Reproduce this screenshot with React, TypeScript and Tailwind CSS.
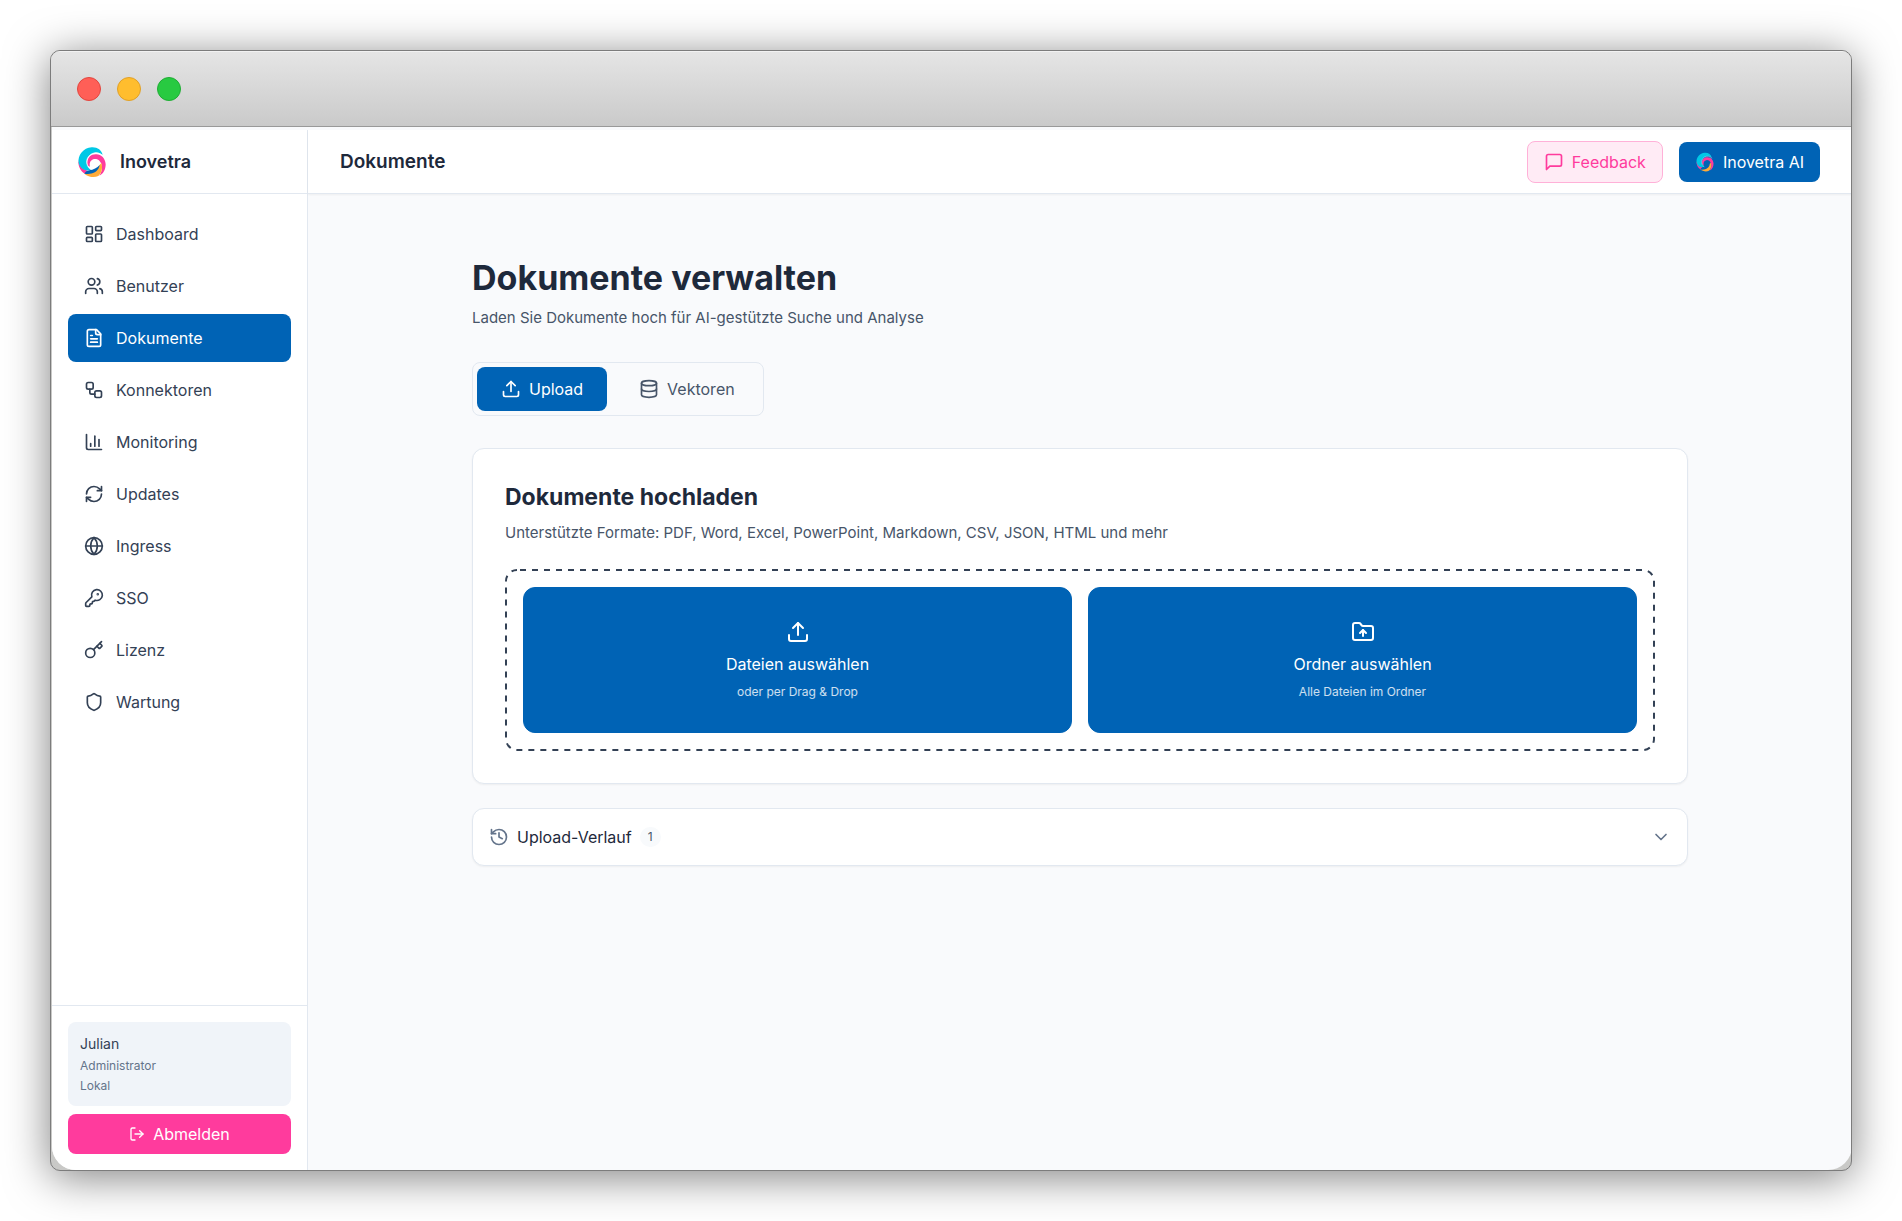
import { useState } from "react";
import type { ReactNode } from "react";
import {
  ChartColumn,
  ChevronDown,
  Database,
  FolderUp,
  Globe,
  History,
  Key,
  KeyRound,
  LayoutDashboard,
  LogOut,
  RefreshCw,
  Shield,
  Upload,
  Users,
  Workflow,
} from "lucide-react";

type IconProps = { className?: string };

function StrokeIcon({ className, children }: IconProps & { children: ReactNode }) {
  return (
    <svg
      className={className}
      viewBox="0 0 24 24"
      fill="none"
      stroke="currentColor"
      strokeWidth={2}
      strokeLinecap="round"
      strokeLinejoin="round"
      aria-hidden="true"
    >
      {children}
    </svg>
  );
}

function DocumentIcon({ className }: IconProps) {
  return (
    <StrokeIcon className={className}>
      <path d="M15 2H6a2 2 0 0 0-2 2v16a2 2 0 0 0 2 2h12a2 2 0 0 0 2-2V7Z" />
      <path d="M14 2v4a2 2 0 0 0 2 2h4" />
      <path d="M10 9H8" />
      <path d="M16 13H8" />
      <path d="M16 17H8" />
    </StrokeIcon>
  );
}

function MessageIcon({ className }: IconProps) {
  return (
    <StrokeIcon className={className}>
      <path d="M21 15a2 2 0 0 1-2 2H7l-4 4V5a2 2 0 0 1 2-2h14a2 2 0 0 1 2 2z" />
    </StrokeIcon>
  );
}

function Logo({ className }: IconProps) {
  return (
    <svg className={className} viewBox="18 33 96 96" aria-hidden="true">
      {/* pink */}
      <path
        fill="#ff3b9d"
        d="M52 84C52 66 64 57 79 58C94 59 106 70 107 88C107 103 101 116 88 122C95 112 98 99 95 89C91 76 82 71 73 72C62 74 57 83 60 95C55 95 52 90 52 84Z"
      />
      <path fill="#ff3b9d" d="M25 76C24 95 32 110 46 117L53 107C38 104 28 92 25 76Z" />
      {/* orange */}
      <path
        fill="#ffab38"
        d="M94 84C99 99 95 114 85 123C72 129 55 126 43 116C62 119 82 109 88 91Z"
      />
      {/* blue */}
      <path fill="#0063b5" d="M89 90C87 108 68 121 43 116C47 110 51 107 57 106C71 104 81 99 89 90Z" />
      {/* cyan */}
      <path
        fill="#00c8e6"
        d="M98 60C89 51 75 50 64 57C51 65 47 79 52 91C55 98 58 101 63 104C48 111 31 102 26 84C22 62 40 38 65 37C82 36 95 45 98 60Z"
      />
      {/* highlight between the arms */}
      <path
        fill="none"
        stroke="#ffffff"
        strokeOpacity={0.6}
        strokeWidth={3}
        strokeLinecap="round"
        d="M99 62C88 52 75 51 64 57C51 65 47 79 52 91C54 96 57 100 61 103"
      />
    </svg>
  );
}

const navItems = [
  { label: "Dashboard", icon: LayoutDashboard },
  { label: "Benutzer", icon: Users },
  { label: "Dokumente", icon: DocumentIcon },
  { label: "Konnektoren", icon: Workflow },
  { label: "Monitoring", icon: ChartColumn },
  { label: "Updates", icon: RefreshCw },
  { label: "Ingress", icon: Globe },
  { label: "SSO", icon: KeyRound },
  { label: "Lizenz", icon: Key },
  { label: "Wartung", icon: Shield },
];

const tabs = [
  { id: "upload", label: "Upload", icon: Upload },
  { id: "vectors", label: "Vektoren", icon: Database },
];

const pickers = [
  { title: "Dateien auswählen", hint: "oder per Drag & Drop", icon: Upload },
  { title: "Ordner auswählen", hint: "Alle Dateien im Ordner", icon: FolderUp },
];

function Sidebar() {
  return (
    <aside className="flex w-64 shrink-0 flex-col border-r border-[#e2e8f0] bg-white">
      <div className="flex h-16 items-center gap-3 border-b border-[#e2e8f0] px-6">
        <Logo className="h-8 w-8" />
        <span className="text-lg font-semibold text-[#1e293b]">Inovetra</span>
      </div>

      <nav className="flex flex-1 flex-col gap-1 p-4">
        {navItems.map(({ label, icon: Icon }) => (
          <a
            key={label}
            href="#"
            className={`flex h-12 items-center gap-3 rounded-lg px-4 text-base ${
              label === "Dokumente" ? "bg-[#0063b5] text-white" : "text-[#334155]"
            }`}
          >
            <Icon className="h-5 w-5" />
            {label}
          </a>
        ))}
      </nav>

      <div className="border-t border-[#e2e8f0] p-4">
        <div className="mb-2 flex flex-col gap-1 rounded-lg bg-[#f0f4f9] p-3 text-xs text-[#64748b]">
          <p className="text-sm text-[#334155]">Julian</p>
          <p>Administrator</p>
          <p>Lokal</p>
        </div>
        <button
          type="button"
          className="flex h-10 w-full items-center justify-center gap-2 rounded-lg bg-[#ff3b9d] text-base text-white"
        >
          <LogOut className="h-4 w-4" />
          Abmelden
        </button>
      </div>
    </aside>
  );
}

function Header() {
  return (
    <header className="z-10 flex h-16 items-center justify-between border-b border-[#e2e8f0] bg-white px-8 shadow-xs">
      <span className="text-[19px] leading-7 font-semibold text-[#1e293b]">Dokumente</span>
      <div className="flex items-center gap-4">
        <button
          type="button"
          className="flex items-center gap-2 rounded-lg border border-[#ffb1d8] bg-[#ffebf5] px-4 py-2 text-base text-[#ff3b9d]"
        >
          <MessageIcon className="h-5 w-5" />
          Feedback
        </button>
        <button
          type="button"
          className="flex items-center gap-2 rounded-lg bg-[#0063b5] px-4 py-2 text-base text-white"
        >
          <Logo className="h-5 w-5" />
          Inovetra AI
        </button>
      </div>
    </header>
  );
}

function UploadCard() {
  return (
    <section className="rounded-xl border border-[#e2e8f0] bg-white p-8 shadow-xs">
      <h2 className="text-[23px] leading-8 font-bold text-[#1e293b]">Dokumente hochladen</h2>
      <p className="mt-2 mb-6 text-[15px] leading-6 text-[#475569]">
        Unterstützte Formate: PDF, Word, Excel, PowerPoint, Markdown, CSV, JSON, HTML und mehr
      </p>
      <div className="relative grid grid-cols-2 gap-4 p-[18px]">
        {/* Dashed drop zone outline */}
        <svg className="pointer-events-none absolute inset-0 h-full w-full" aria-hidden="true">
          <rect
            className="h-[calc(100%-2px)] w-[calc(100%-2px)] fill-none stroke-[#334155] stroke-2"
            x={1}
            y={1}
            rx={11}
            strokeDasharray="6 6"
            strokeDashoffset={-3}
          />
        </svg>
        {pickers.map(({ title, hint, icon: Icon }) => (
          <button
            key={title}
            type="button"
            className="flex flex-col items-center gap-2 rounded-xl border border-[#0063b5] bg-[#0063b5] p-8 text-white"
          >
            <Icon className="h-6 w-6" />
            <span className="text-base">{title}</span>
            <span className="text-xs text-white/80">{hint}</span>
          </button>
        ))}
      </div>
    </section>
  );
}

function DocumentsPage() {
  const [activeTab, setActiveTab] = useState("upload");
  const [historyOpen, setHistoryOpen] = useState(false);

  return (
    <main className="flex-1 p-8">
      <div className="mx-auto max-w-7xl p-8">
        <h1 className="text-[34px] leading-10 font-bold text-[#1e293b]">Dokumente verwalten</h1>
        <p className="mt-2 text-[15px] leading-6 text-[#475569]">
          Laden Sie Dokumente hoch für AI-gestützte Suche und Analyse
        </p>

        <div className="my-8 flex w-fit gap-2 rounded-lg border border-[#e2e8f0] p-1">
          {tabs.map(({ id, label, icon: Icon }) => (
            <button
              key={id}
              type="button"
              onClick={() => setActiveTab(id)}
              className={`flex h-11 items-center gap-2 rounded-lg px-6 text-base ${
                activeTab === id ? "bg-[#0063b5] text-white" : "text-[#475569]"
              }`}
            >
              <Icon className="h-5 w-5" />
              {label}
            </button>
          ))}
        </div>

        <UploadCard />

        <button
          type="button"
          onClick={() => setHistoryOpen(!historyOpen)}
          aria-expanded={historyOpen}
          className="mt-6 flex w-full items-center gap-2 rounded-xl border border-[#e2e8f0] bg-white p-4 text-[#64748b] shadow-xs"
        >
          <History className="h-5 w-5" />
          <span className="text-base text-[#1e293b]">Upload-Verlauf</span>
          <span className="rounded-full bg-[#f8fafc] px-2 py-0.5 text-xs text-[#475569]">1</span>
          <ChevronDown className="ml-auto h-5 w-5" />
        </button>
      </div>
    </main>
  );
}

export default function App() {
  return (
    <div className="flex min-h-screen bg-white p-[50px] font-[Inter,sans-serif]">
      <div className="flex flex-1 flex-col overflow-hidden rounded-[10px] border border-[#7c7c7c] bg-[#c9c9c7] shadow-[0_6px_44px_rgba(0,0,0,0.5)]">
        {/* Title bar */}
        <div className="flex h-[76px] items-center gap-4 border-t border-b border-t-[#f2f2f2] border-b-[#999999] bg-linear-to-b from-[#e5e5e5] to-[#cacaca] px-[26px]">
          <span className="h-6 w-6 rounded-full border border-[#e2463f] bg-[#ff5f57]" />
          <span className="h-6 w-6 rounded-full border border-[#e0a028] bg-[#ffbd2e]" />
          <span className="h-6 w-6 rounded-full border border-[#1fad34] bg-[#28ca41]" />
        </div>

        <div className="-mr-px ml-px flex flex-1 overflow-hidden rounded-b-3xl bg-[#f9fafc] pt-[3px]">
          <Sidebar />
          <div className="flex min-w-0 flex-1 flex-col">
            <Header />
            <DocumentsPage />
          </div>
        </div>
      </div>
    </div>
  );
}
